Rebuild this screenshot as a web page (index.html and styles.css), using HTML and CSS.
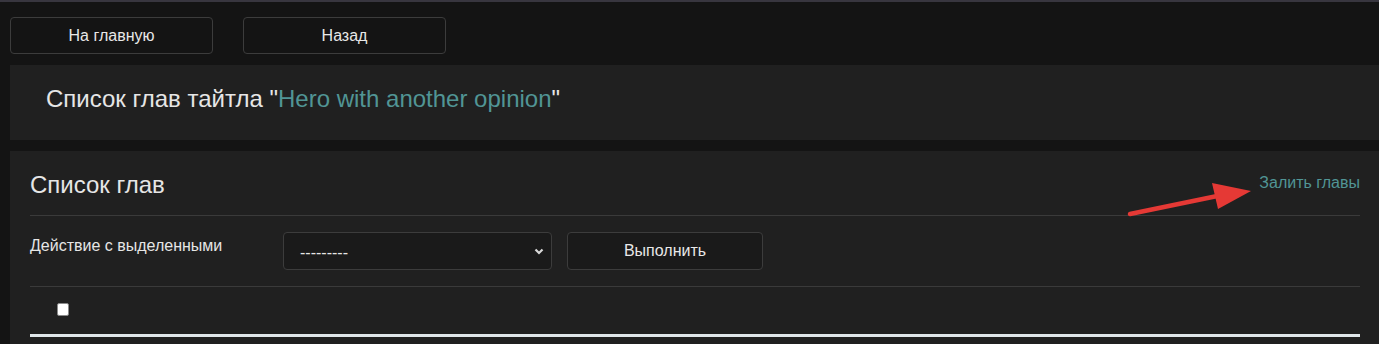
FILE: index.html
```html
<!DOCTYPE html>
<html lang="ru">
<head>
<meta charset="utf-8">
<title>Список глав</title>
<link rel="stylesheet" href="styles.css">
</head>
<body>
<nav class="topnav">
  <a class="btn nav-btn" href="#">На главную</a>
  <a class="btn nav-btn" href="#">Назад</a>
</nav>
<section class="card title-card">
  <h1 class="page-title">Список глав тайтла "<a class="link" href="#">Hero with another opinion</a>"</h1>
</section>
<section class="card list-card">
  <div class="list-head">
    <h2 class="list-title">Список глав</h2>
    <a class="link upload" href="#">Залить главы</a>
  </div>
  <form class="action-row">
    <label class="action-label">Действие с выделенными</label>
    <div class="select">
      <span class="select-value">---------</span>
      <svg class="chev" width="10" height="7" viewBox="0 0 10 7"><path d="M1.5 1.5 L5 5 L8.5 1.5" fill="none" stroke="#d8d8d8" stroke-width="2.2"/></svg>
    </div>
    <button type="button" class="btn run-btn">Выполнить</button>
  </form>
  <div class="table-head">
    <span class="checkbox"></span>
  </div>
  <svg class="arrow" width="130" height="40" viewBox="0 0 130 40">
    <line x1="3" y1="34" x2="100" y2="14" stroke="#e53935" stroke-width="4.5" stroke-linecap="round"/>
    <polygon points="85,3 124,11 91,29" fill="#e53935"/>
  </svg>
</section>
</body>
</html>
```
FILE: styles.css
```css
html, body {
  margin: 0;
  padding: 0;
}
body {
  background: #141414;
  border-top: 2px solid #38363f;
  font-family: "Liberation Sans", Arial, sans-serif;
  color: #dcdcdc;
  height: 342px;
  overflow: hidden;
}
.topnav {
  display: flex;
  gap: 30px;
  padding: 15px 10px 11px;
}
.btn {
  box-sizing: border-box;
  display: flex;
  align-items: center;
  justify-content: center;
  height: 37px;
  border: 1px solid #3c3c3c;
  border-radius: 4px;
  background: #141414;
  color: #e8e8e8;
  font-family: "Liberation Sans", Arial, sans-serif;
  font-size: 16px;
  text-decoration: none;
}
.nav-btn {
  width: 203px;
}
.card {
  background: #202020;
  margin-left: 10px;
}
.title-card {
  height: 75px;
  box-sizing: border-box;
  padding: 20px 36px 0;
}
.page-title {
  margin: 0;
  font-size: 24px;
  font-weight: normal;
  color: #e6e6e6;
}
.link {
  color: #519595;
  text-decoration: none;
}
.list-card {
  margin-top: 11px;
  padding: 0 19px 0 20px;
  position: relative;
  height: 200px;
}
.list-head {
  display: flex;
  justify-content: space-between;
  align-items: flex-start;
  height: 65px;
  border-bottom: 1px solid #3a3a3a;
  box-sizing: border-box;
}
.list-title {
  margin: 20px 0 0;
  font-size: 24px;
  font-weight: normal;
  color: #e6e6e6;
}
.upload {
  margin-top: 23px;
  font-size: 16px;
}
.action-row {
  display: flex;
  align-items: flex-start;
  height: 71px;
  box-sizing: border-box;
  padding-top: 16px;
  border-bottom: 1px solid #3a3a3a;
  margin: 0;
}
.action-label {
  width: 253px;
  font-size: 16px;
  color: #e6e6e6;
  padding-top: 5px;
}
.select {
  box-sizing: border-box;
  width: 269px;
  height: 38px;
  border: 1px solid #3c3c3c;
  border-radius: 4px;
  background: #1a1a1a;
  display: flex;
  align-items: center;
  justify-content: space-between;
  padding: 0 7px 0 16px;
  font-size: 16px;
  color: #e6e6e6;
}
.select-value {
  padding-top: 4px;
}
.run-btn {
  width: 196px;
  height: 38px;
  margin-left: 15px;
  background: #1a1a1a;
}
.table-head {
  height: 50px;
  box-sizing: border-box;
  border-bottom: 3px solid #e0e6ea;
  padding: 16px 0 0 27px;
}
.checkbox {
  display: block;
  width: 12px;
  height: 13px;
  box-sizing: border-box;
  background: #ffffff;
  border: 1px solid #8a8a8a;
  border-radius: 2px;
}
.arrow {
  position: absolute;
  left: 1117px;
  top: 29px;
}
```
